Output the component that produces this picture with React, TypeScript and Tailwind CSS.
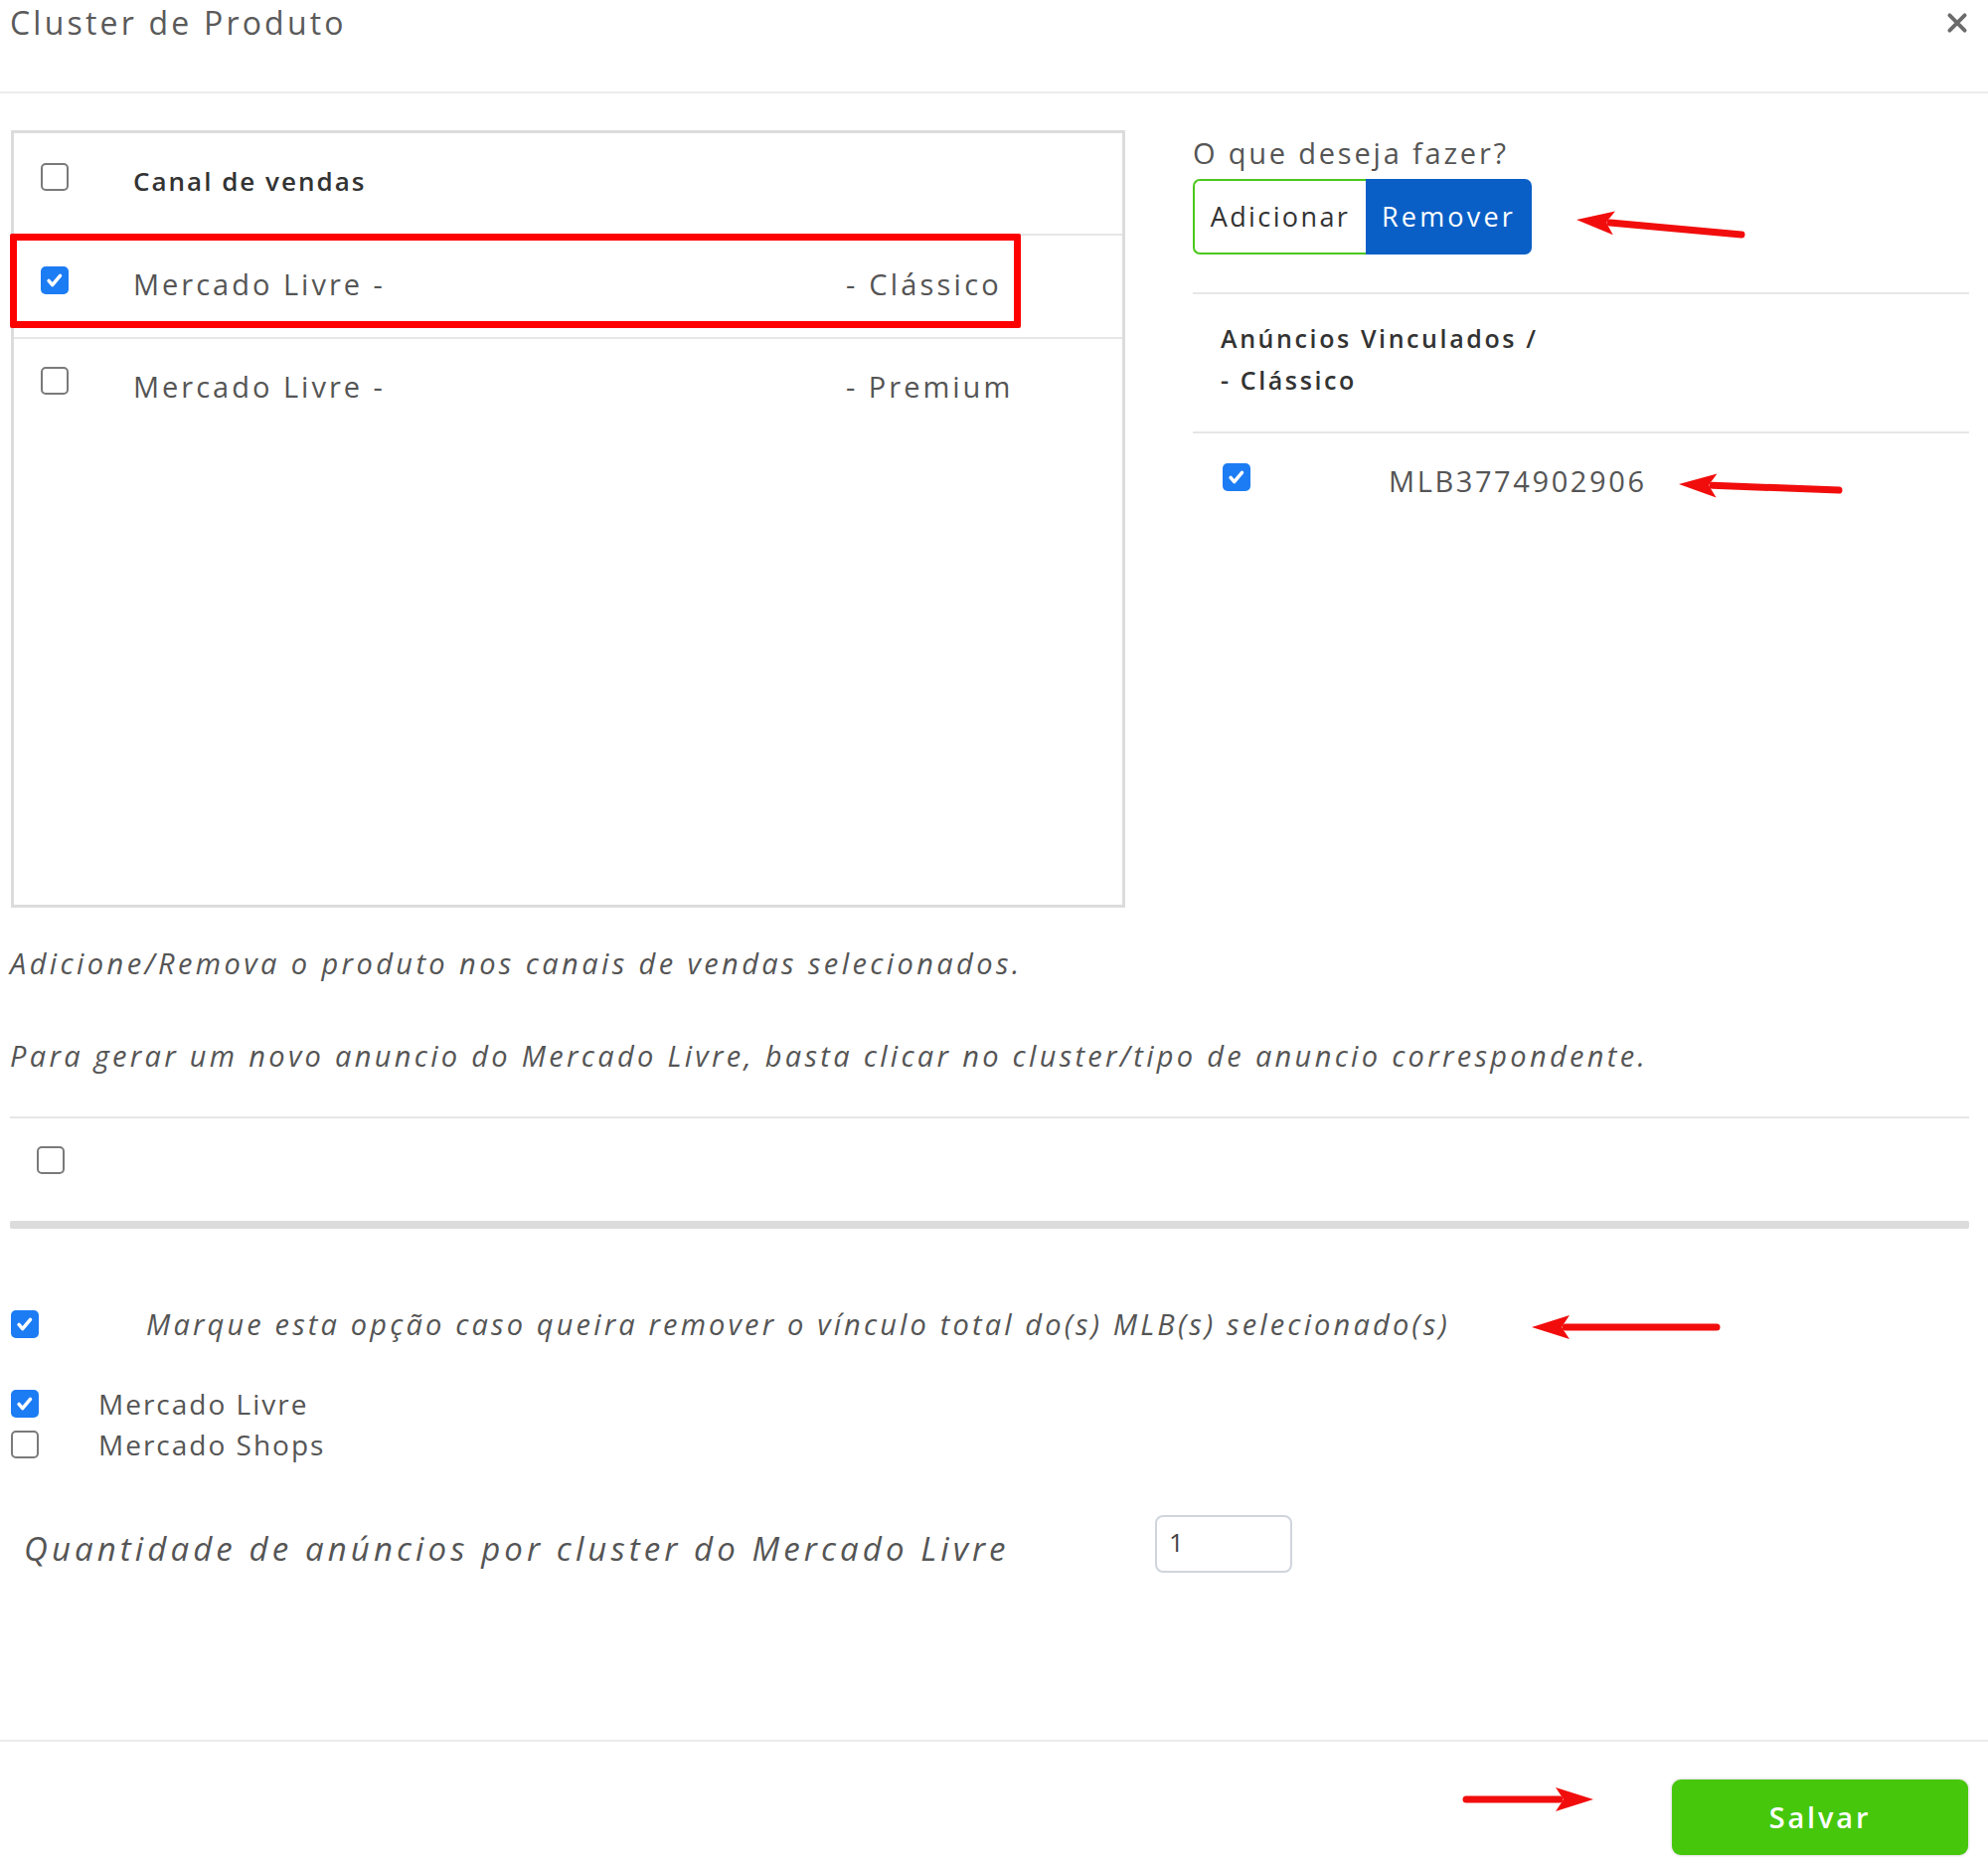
import React from 'react';

function Box({ checked = false }: { checked?: boolean }) {
  if (checked) {
    return (
      <span className="inline-flex w-[28px] h-[28px] shrink-0 items-center justify-center rounded-[5px] bg-[#1c7cf4]">
        <svg viewBox="0 0 24 24" className="w-[22px] h-[22px]" fill="none" stroke="white" strokeWidth={3.8} strokeLinecap="round" strokeLinejoin="round">
          <path d="M5.5 12.5l4 4.5 8.5-10" />
        </svg>
      </span>
    );
  }
  return <span className="inline-block w-[28px] h-[28px] shrink-0 rounded-[5px] border-2 border-[#7a7a7a] bg-white" />;
}

type ArrowDef = { tx: number; ty: number; hx: number; hy: number };

const ARROWS: ArrowDef[] = [
  { tx: 1752, ty: 236, hx: 1586, hy: 221 },
  { tx: 1850, ty: 493, hx: 1689, hy: 487 },
  { tx: 1727, ty: 1335, hx: 1541, hy: 1335 },
  { tx: 1475, ty: 1810, hx: 1603, hy: 1810 },
];

function Arrows() {
  return (
    <svg className="absolute inset-0 pointer-events-none" width={2000} height={1876}>
      {ARROWS.map((a, i) => {
        const dx = a.hx - a.tx;
        const dy = a.hy - a.ty;
        const len = Math.hypot(dx, dy);
        const ux = dx / len;
        const uy = dy / len;
        const headLen = 38;
        const half = 12;
        const bx = a.hx - ux * headLen;
        const by = a.hy - uy * headLen;
        const px = -uy * half;
        const py = ux * half;
        return (
          <g key={i}>
            <line x1={a.tx} y1={a.ty} x2={bx + ux * 4} y2={by + uy * 4} stroke="#f20d0d" strokeWidth={7} strokeLinecap="round" />
            <polygon points={`${a.hx},${a.hy} ${bx + px},${by + py} ${bx + ux * 8},${by + uy * 8} ${bx - px},${by - py}`} fill="#f20d0d" />
          </g>
        );
      })}
    </svg>
  );
}

export default function App() {
  return (
    <div className="relative w-[2000px] h-[1876px] overflow-hidden bg-white flex flex-col font-['Open_Sans',sans-serif] text-[#555] tracking-[3px]">
      <header className="h-[94px] shrink-0 border-b-2 border-[#ececec] flex items-start justify-between pl-[10px] pr-[18px]">
        <h1 className="text-[32px] leading-[46px] text-[#5a5a5a] tracking-[3.2px]">Cluster de Produto</h1>
        <svg viewBox="0 0 24 24" className="w-[26px] h-[26px] mt-[10px]" fill="none" stroke="#6b6b6b" strokeWidth={3.6} strokeLinecap="round">
          <path d="M5 5l14 14M19 5L5 19" />
        </svg>
      </header>

      <main className="px-[10px] flex-1">
        <div className="flex mt-[37px]">
          <div className="relative w-[1121px] h-[782px] ml-[1px] border-[3px] border-[#dcdcdc]">
            <div className="h-[103px] flex items-center border-b-2 border-[#e6e6e6]">
              <div className="w-[120px] pl-[27px] -mt-[8px]">
                <Box />
              </div>
              <span className="text-[26px] font-semibold text-[#333] tracking-[2px] -mt-[4px]">Canal de vendas</span>
            </div>
            <div className="h-[104px] flex items-center border-b-2 border-[#e6e6e6]">
              <div className="w-[120px] pl-[27px] -mt-[10px]">
                <Box checked />
              </div>
              <span className="w-[717px] text-[29px] -mt-[4px]">Mercado Livre -</span>
              <span className="text-[29px] -mt-[4px] tracking-[3.2px]">- Clássico</span>
            </div>
            <div className="h-[100px] flex items-center">
              <div className="w-[120px] pl-[27px] -mt-[10px]">
                <Box />
              </div>
              <span className="w-[717px] text-[29px] -mt-[4px]">Mercado Livre -</span>
              <span className="text-[29px] -mt-[4px]">- Premium</span>
            </div>
            <div className="absolute left-[-4px] top-[101px] w-[1017px] h-[95px] border-[7px] border-[#ff0000] rounded-[2px]" />
          </div>

          <div className="ml-[68px] w-[781px]">
            <p className="mt-[5px] text-[29px] leading-[36px] tracking-[2.8px]">O que deseja fazer?</p>
            <div className="mt-[8px] flex h-[76px]">
              <button className="w-[174px] h-full rounded-l-[7px] border-2 border-r-0 border-[#4cc71c] bg-white text-[27px] text-[#333] tracking-[2.4px]">
                Adicionar
              </button>
              <button className="w-[167px] h-full rounded-r-[7px] bg-[#0a5fc6] text-[27px] font-medium text-white tracking-[3.2px]">
                Remover
              </button>
            </div>
            <div className="mt-[38px] border-t-2 border-[#e6e6e6] pt-[23px] pb-[31px] pl-[28px] text-[25px] leading-[42px] font-semibold text-[#333] tracking-[2.6px]">
              <p>Anúncios Vinculados /</p>
              <p>- Clássico</p>
            </div>
            <div className="border-t-2 border-[#e6e6e6] h-[90px] flex items-center pl-[30px] pt-[8px]">
              <div className="-mt-[6px]">
                <Box checked />
              </div>
              <span className="ml-[139px] text-[29px] tracking-[2.6px]">MLB3774902906</span>
            </div>
          </div>
        </div>

        <p className="mt-[36px] text-[29px] leading-[40px] italic tracking-[3.4px]">
          Adicione/Remova o produto nos canais de vendas selecionados.
        </p>
        <p className="mt-[53px] text-[29px] leading-[40px] italic tracking-[3.3px]">
          Para gerar um novo anuncio do Mercado Livre, basta clicar no cluster/tipo de anuncio correspondente.
        </p>

        <div className="mt-[41px] w-[1971px] border-t-2 border-[#e6e6e6] pt-[28px] pl-[27px]">
          <Box />
        </div>
        <div className="mt-[41px] w-[1971px] h-[8px] bg-[#dcdcdc] rounded-[2px]" />

        <div className="mt-[76px] h-[40px] flex items-center pl-[1px]">
          <Box checked />
          <span className="ml-[108px] text-[29px] italic tracking-[3.15px]">
            Marque esta opção caso queira remover o vínculo total do(s) MLB(s) selecionado(s)
          </span>
        </div>
        <div className="mt-[40px] h-[40px] flex items-center pl-[1px]">
          <Box checked />
          <span className="ml-[60px] text-[28px] tracking-[2px]">Mercado Livre</span>
        </div>
        <div className="mt-[1px] h-[40px] flex items-center pl-[1px]">
          <Box />
          <span className="ml-[60px] text-[28px] tracking-[2px]">Mercado Shops</span>
        </div>

        <div className="mt-[50px] flex items-center">
          <span className="w-[1152px] pl-[14px] text-[33px] italic tracking-[4.1px] mt-[10px]">
            Quantidade de anúncios por cluster do Mercado Livre
          </span>
          <div className="w-[138px] h-[58px] rounded-[8px] border-2 border-[#d0d5dc] px-[12px] flex items-start pt-[6px] text-[26px] text-[#444] tracking-normal">
            1
          </div>
        </div>
      </main>

      <footer className="h-[126px] shrink-0 border-t-2 border-[#ececec] flex justify-end items-start pt-[38px] pr-[20px]">
        <button className="w-[298px] h-[76px] rounded-[9px] bg-[#46c70c] text-white text-[29px] font-semibold tracking-[2.8px] shadow-[0_0_3px_rgba(0,0,0,0.25)]">
          Salvar
        </button>
      </footer>

      <Arrows />
    </div>
  );
}
